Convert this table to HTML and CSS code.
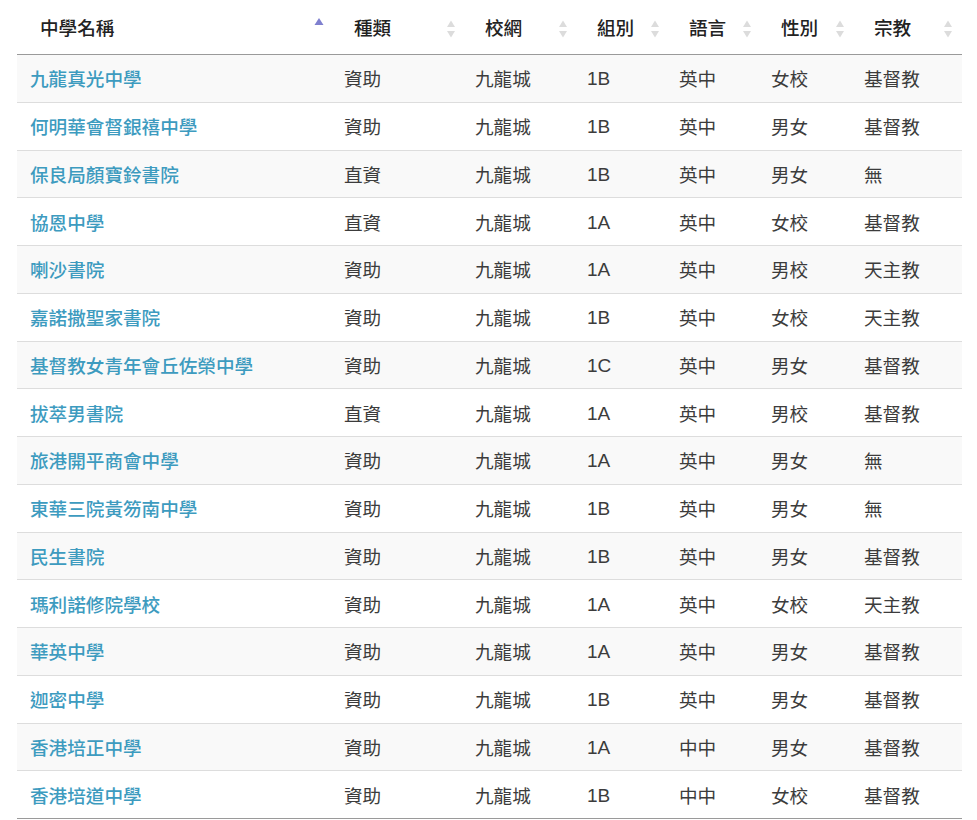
FILE: index.html
```html
<!DOCTYPE html>
<html lang="zh-Hant">
<head>
<meta charset="utf-8">
<title>中學名單</title>
<link rel="stylesheet" href="styles.css">
</head>
<body>
<table class="schools">
  <colgroup>
    <col class="c1"><col class="c2"><col class="c3"><col class="c4"><col class="c5"><col class="c6"><col class="c7">
  </colgroup>
  <thead>
    <tr>
      <th><div class="th-in th-first"><span>中學名稱</span><span class="sort asc"><svg width="10" height="9" viewBox="0 0 10 9"><path d="M5 1 L9.5 8 L0.5 8 Z" fill="#7f80cf"/></svg></span></div></th>
      <th><div class="th-in"><span>種類</span><span class="sort both"><svg width="10" height="20" viewBox="0 0 10 20"><path d="M5 1.5 L9 8 L1 8 Z" fill="#dcdcdc"/><path d="M5 18.5 L9 12 L1 12 Z" fill="#dcdcdc"/></svg></span></div></th>
      <th><div class="th-in"><span>校網</span><span class="sort both"><svg width="10" height="20" viewBox="0 0 10 20"><path d="M5 1.5 L9 8 L1 8 Z" fill="#dcdcdc"/><path d="M5 18.5 L9 12 L1 12 Z" fill="#dcdcdc"/></svg></span></div></th>
      <th><div class="th-in"><span>組別</span><span class="sort both"><svg width="10" height="20" viewBox="0 0 10 20"><path d="M5 1.5 L9 8 L1 8 Z" fill="#dcdcdc"/><path d="M5 18.5 L9 12 L1 12 Z" fill="#dcdcdc"/></svg></span></div></th>
      <th><div class="th-in"><span>語言</span><span class="sort both"><svg width="10" height="20" viewBox="0 0 10 20"><path d="M5 1.5 L9 8 L1 8 Z" fill="#dcdcdc"/><path d="M5 18.5 L9 12 L1 12 Z" fill="#dcdcdc"/></svg></span></div></th>
      <th><div class="th-in"><span>性別</span><span class="sort both"><svg width="10" height="20" viewBox="0 0 10 20"><path d="M5 1.5 L9 8 L1 8 Z" fill="#dcdcdc"/><path d="M5 18.5 L9 12 L1 12 Z" fill="#dcdcdc"/></svg></span></div></th>
      <th><div class="th-in"><span>宗教</span><span class="sort both"><svg width="10" height="20" viewBox="0 0 10 20"><path d="M5 1.5 L9 8 L1 8 Z" fill="#dcdcdc"/><path d="M5 18.5 L9 12 L1 12 Z" fill="#dcdcdc"/></svg></span></div></th>
    </tr>
  </thead>
  <tbody>
    <tr><td><a href="#">九龍真光中學</a></td><td>資助</td><td>九龍城</td><td class="band">1B</td><td>英中</td><td>女校</td><td>基督教</td></tr>
    <tr><td><a href="#">何明華會督銀禧中學</a></td><td>資助</td><td>九龍城</td><td class="band">1B</td><td>英中</td><td>男女</td><td>基督教</td></tr>
    <tr><td><a href="#">保良局顏寶鈴書院</a></td><td>直資</td><td>九龍城</td><td class="band">1B</td><td>英中</td><td>男女</td><td>無</td></tr>
    <tr><td><a href="#">協恩中學</a></td><td>直資</td><td>九龍城</td><td class="band">1A</td><td>英中</td><td>女校</td><td>基督教</td></tr>
    <tr><td><a href="#">喇沙書院</a></td><td>資助</td><td>九龍城</td><td class="band">1A</td><td>英中</td><td>男校</td><td>天主教</td></tr>
    <tr><td><a href="#">嘉諾撒聖家書院</a></td><td>資助</td><td>九龍城</td><td class="band">1B</td><td>英中</td><td>女校</td><td>天主教</td></tr>
    <tr><td><a href="#">基督教女青年會丘佐榮中學</a></td><td>資助</td><td>九龍城</td><td class="band">1C</td><td>英中</td><td>男女</td><td>基督教</td></tr>
    <tr><td><a href="#">拔萃男書院</a></td><td>直資</td><td>九龍城</td><td class="band">1A</td><td>英中</td><td>男校</td><td>基督教</td></tr>
    <tr><td><a href="#">旅港開平商會中學</a></td><td>資助</td><td>九龍城</td><td class="band">1A</td><td>英中</td><td>男女</td><td>無</td></tr>
    <tr><td><a href="#">東華三院黃笏南中學</a></td><td>資助</td><td>九龍城</td><td class="band">1B</td><td>英中</td><td>男女</td><td>無</td></tr>
    <tr><td><a href="#">民生書院</a></td><td>資助</td><td>九龍城</td><td class="band">1B</td><td>英中</td><td>男女</td><td>基督教</td></tr>
    <tr><td><a href="#">瑪利諾修院學校</a></td><td>資助</td><td>九龍城</td><td class="band">1A</td><td>英中</td><td>女校</td><td>天主教</td></tr>
    <tr><td><a href="#">華英中學</a></td><td>資助</td><td>九龍城</td><td class="band">1A</td><td>英中</td><td>男女</td><td>基督教</td></tr>
    <tr><td><a href="#">迦密中學</a></td><td>資助</td><td>九龍城</td><td class="band">1B</td><td>英中</td><td>男女</td><td>基督教</td></tr>
    <tr><td><a href="#">香港培正中學</a></td><td>資助</td><td>九龍城</td><td class="band">1A</td><td>中中</td><td>男女</td><td>基督教</td></tr>
    <tr><td><a href="#">香港培道中學</a></td><td>資助</td><td>九龍城</td><td class="band">1B</td><td>中中</td><td>女校</td><td>基督教</td></tr>
  </tbody>
</table>
</body>
</html>
```
FILE: styles.css
```css
html, body {
  margin: 0;
  padding: 0;
  background: #ffffff;
}
body {
  padding-left: 17px;
  font-family: "Liberation Sans", "Noto Sans CJK TC", sans-serif;
  color: #3c3c3c;
}
.schools {
  width: 945px;
  border-collapse: collapse;
  table-layout: fixed;
  font-size: 18.6px;
}
.c1 { width: 317px; }
.c2 { width: 131px; }
.c3 { width: 112px; }
.c4 { width: 92px; }
.c5 { width: 92px; }
.c6 { width: 93px; }
.c7 { width: 108px; }

.schools th {
  height: 54px;
  padding: 0;
  border-bottom: 1px solid #9a9a9a;
  font-weight: 500;
  color: #222222;
  text-align: left;
  vertical-align: middle;
}
.th-in {
  display: flex;
  align-items: center;
  justify-content: space-between;
  padding: 0 9px 0 20px;
  height: 54px;
}
.th-first {
  padding-left: 23px;
  padding-right: 10px;
}
.th-in > span:first-child {
  position: relative;
  top: -1px;
}
.sort {
  display: flex;
  align-items: center;
}
.sort.asc {
  position: relative;
  top: -6px;
}
.sort.both {
  position: relative;
  top: 2px;
}
.sort svg { display: block; }

.schools td {
  height: 45.75px;
  padding: 0 0 1px 10px;
  border-bottom: 1px solid #dddddd;
  vertical-align: middle;
  white-space: nowrap;
}
.schools td:first-child {
  padding-left: 13px;
}
.schools td.band {
  padding-top: 2px;
  padding-bottom: 0;
  height: 44.75px;
  font-size: 19px;
}
.schools tbody tr:nth-child(odd) td {
  background: #f9f9f9;
}
.schools tbody tr:last-child td {
  border-bottom: 1px solid #9a9a9a;
}
.schools a {
  color: #3d9bbf;
  text-decoration: none;
  font-weight: 500;
}
```
